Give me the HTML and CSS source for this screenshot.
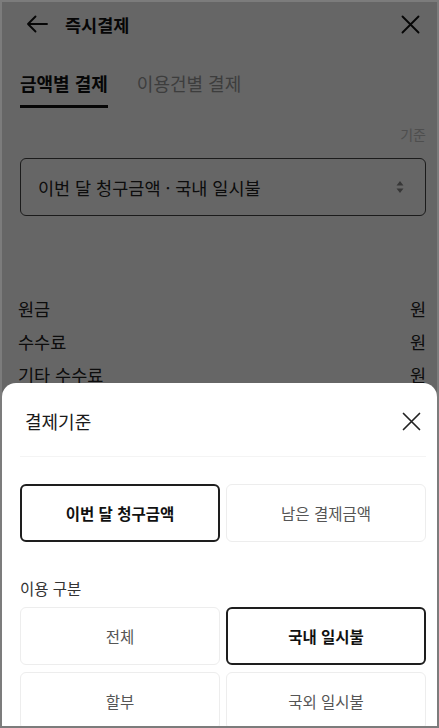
FILE: index.html
```html
<!DOCTYPE html>
<html lang="ko">
<head>
<meta charset="utf-8">
<title>즉시결제</title>
<link rel="stylesheet" href="styles.css">
</head>
<body>
<div class="frame">
  <div class="page">
    <header class="topbar">
      <button class="icon-btn back" aria-label="뒤로">
        <svg width="22" height="18" viewBox="0 0 22 18" fill="none" stroke="#111" stroke-width="1.9" stroke-linecap="round" stroke-linejoin="round"><path d="M21 9H2M9.5 1.5L2 9l7.5 7.5"/></svg>
      </button>
      <h1 class="title">즉시결제</h1>
      <button class="icon-btn close" aria-label="닫기">
        <svg width="19" height="19" viewBox="0 0 19 19" fill="none" stroke="#111" stroke-width="1.9" stroke-linecap="round"><path d="M1.5 1.5l16 16M17.5 1.5l-16 16"/></svg>
      </button>
    </header>
    <nav class="tabs">
      <span class="tab active">금액별 결제</span>
      <span class="tab">이용건별 결제</span>
    </nav>
    <div class="basis">기준</div>
    <div class="select">
      <span>이번 달 청구금액 · 국내 일시불</span>
      <svg width="8" height="14" viewBox="0 0 8 14" fill="#8a8a8a"><path d="M4 1l3.5 4.5h-7zM0.5 8.5h7L4 13z"/></svg>
    </div>
    <ul class="rows">
      <li><span>원금</span><span>원</span></li>
      <li><span>수수료</span><span>원</span></li>
      <li><span>기타 수수료</span><span>원</span></li>
    </ul>
  </div>
  <div class="dim"></div>
  <section class="sheet">
    <div class="sheet-head">
      <h2 class="sheet-title">결제기준</h2>
      <button class="icon-btn sheet-close" aria-label="닫기">
        <svg width="19" height="19" viewBox="0 0 19 19" fill="none" stroke="#222" stroke-width="1.7" stroke-linecap="round"><path d="M1.5 1.5l16 16M17.5 1.5l-16 16"/></svg>
      </button>
    </div>
    <div class="options">
      <button class="opt selected">이번 달 청구금액</button>
      <button class="opt">남은 결제금액</button>
    </div>
    <div class="label">이용 구분</div>
    <div class="options grid">
      <button class="opt">전체</button>
      <button class="opt selected">국내 일시불</button>
      <button class="opt">할부</button>
      <button class="opt">국외 일시불</button>
    </div>
  </section>
</div>
</body>
</html>
```

FILE: styles.css
```css
* { box-sizing: border-box; margin: 0; padding: 0; }
html, body { width: 439px; height: 728px; overflow: hidden; }
body {
  font-family: "Noto Sans CJK KR", "Noto Sans", sans-serif;
  color: #111;
  background: #fff;
}
.frame {
  position: relative;
  width: 439px;
  height: 728px;
  border: 2px solid #7c7c7c;
  overflow: hidden;
  background: #fff;
}
.page { padding: 0 11px 0 18px; }
.icon-btn {
  border: 0;
  background: none;
  display: flex;
  align-items: center;
  justify-content: center;
  cursor: pointer;
}
.topbar {
  height: 46px;
  display: flex;
  align-items: center;
}
.back { margin-left: 6px; margin-top: -3px; }
.title {
  font-size: 17.5px;
  font-weight: 700;
  line-height: 24px;
  margin-left: 17px;
  flex: 1;
}
.close { margin-right: 6px; margin-top: -1px; }
.tabs {
  display: flex;
  gap: 29px;
  margin-top: 23px;
}
.tab {
  font-size: 18px;
  line-height: 24px;
  color: #9a9a9a;
  padding-bottom: 10px;
  border-bottom: 3px solid transparent;
}
.tab.active {
  color: #111;
  font-weight: 700;
  border-bottom-color: #111;
}
.basis {
  margin-top: 16px;
  text-align: right;
  font-size: 14px;
  line-height: 20px;
  color: #c4c4c4;
}
.select {
  margin-top: 14px;
  height: 58px;
  border: 1.5px solid #444;
  border-radius: 6px;
  display: flex;
  align-items: center;
  justify-content: space-between;
  padding: 0 21px 0 17px;
  font-size: 17.5px;
  color: #222;
}
.rows {
  list-style: none;
  margin-top: 76px;
  margin-left: -2px;
}
.rows li {
  display: flex;
  justify-content: space-between;
  font-size: 17.5px;
  line-height: 33px;
  color: #222;
}
.dim {
  position: absolute;
  inset: 0;
  background: rgba(0, 0, 0, 0.6);
}
.sheet {
  position: absolute;
  left: 0;
  right: 0;
  top: 381px;
  bottom: 0;
  background: #fff;
  border-radius: 14px 14px 0 0;
  padding: 0 11px 0 18px;
}
.sheet-head {
  display: flex;
  align-items: center;
  justify-content: space-between;
  padding: 26px 5px 23px 5px;
  border-bottom: 1px solid #f4f4f4;
}
.sheet-title {
  font-size: 18px;
  font-weight: 400;
  line-height: 24px;
  color: #1a1a1a;
}
.options {
  display: grid;
  grid-template-columns: 1fr 1fr;
  gap: 7px 6px;
  margin-top: 27px;
}
.opt {
  height: 58px;
  border: 1px solid #ededed;
  border-radius: 6px;
  background: #fff;
  font-family: inherit;
  font-size: 15.5px;
  color: #555;
}
.opt.selected {
  border: 2px solid #1e1e1e;
  font-weight: 700;
  color: #111;
}
.label {
  margin-top: 35px;
  font-size: 15.5px;
  line-height: 22px;
  color: #333;
}
.options.grid { margin-top: 8px; }
```
